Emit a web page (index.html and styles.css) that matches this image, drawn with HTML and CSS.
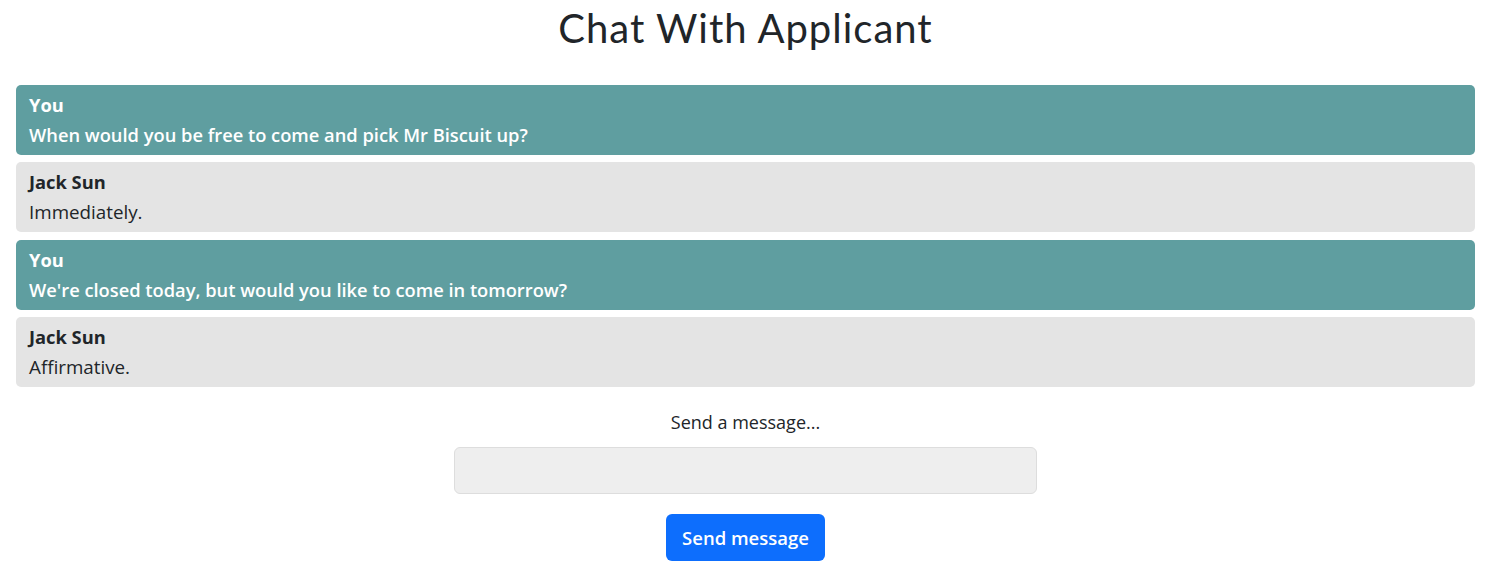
FILE: index.html
```html
<!DOCTYPE html>
<html>
<head>
<meta charset="utf-8">
<link rel="stylesheet" href="styles.css">
</head>
<body>
<h1 class="title">Chat With Applicant</h1>
<div class="messages">
  <div class="msg msg-you"><div class="name">You</div><div class="text">When would you be free to come and pick Mr Biscuit up?</div></div>
  <div class="msg msg-them"><div class="name">Jack Sun</div><div class="text">Immediately.</div></div>
  <div class="msg msg-you"><div class="name">You</div><div class="text">We're closed today, but would you like to come in tomorrow?</div></div>
  <div class="msg msg-them"><div class="name">Jack Sun</div><div class="text">Affirmative.</div></div>
</div>
<form class="send">
  <label class="send-label" for="m">Send a message...</label>
  <input class="send-input" id="m" type="text">
  <button class="send-btn" type="button">Send message</button>
</form>
</body>
</html>
```
FILE: styles.css
```css
* { box-sizing: border-box; }
body {
  margin: 0;
  padding: 0 15px 0 16px;
  font-family: "Open Sans", "Noto Sans", sans-serif;
  color: #212529;
  background: #fff;
}
.title {
  margin: 0;
  padding-top: 4px;
  height: 85px;
  text-align: center;
  font-family: "Lato", sans-serif;
  font-weight: 400;
  font-size: 40px;
  line-height: 48px;
  letter-spacing: 1px;
  color: #212529;
}
.messages {
  display: flex;
  flex-direction: column;
  gap: 7.4px;
}
.msg {
  height: 70px;
  padding: 5px 13px;
  border-radius: 5px;
  font-size: 18.3px;
  line-height: 30px;
}
.msg-you { background: #5f9ea0; color: #fff; }
.msg-you .text { font-weight: 600; }
.msg-them { background: #e4e4e4; color: #212529; }
.msg-them .text { font-size: 18.8px; }
.name { font-weight: 700; }
.send {
  display: flex;
  flex-direction: column;
  align-items: center;
  padding-top: 20px;
}
.send-label {
  font-size: 18px;
  line-height: 30px;
}
.send-input {
  margin-top: 10px;
  width: 583px;
  height: 47px;
  background: #eee;
  border: 1px solid #ddd;
  border-radius: 6px;
}
.send-btn {
  margin-top: 20px;
  width: 159px;
  height: 47px;
  background: #0d6efd;
  color: #fff;
  border: none;
  border-radius: 6px;
  font-family: inherit;
  font-size: 18.5px;
  font-weight: 600;
}
```
